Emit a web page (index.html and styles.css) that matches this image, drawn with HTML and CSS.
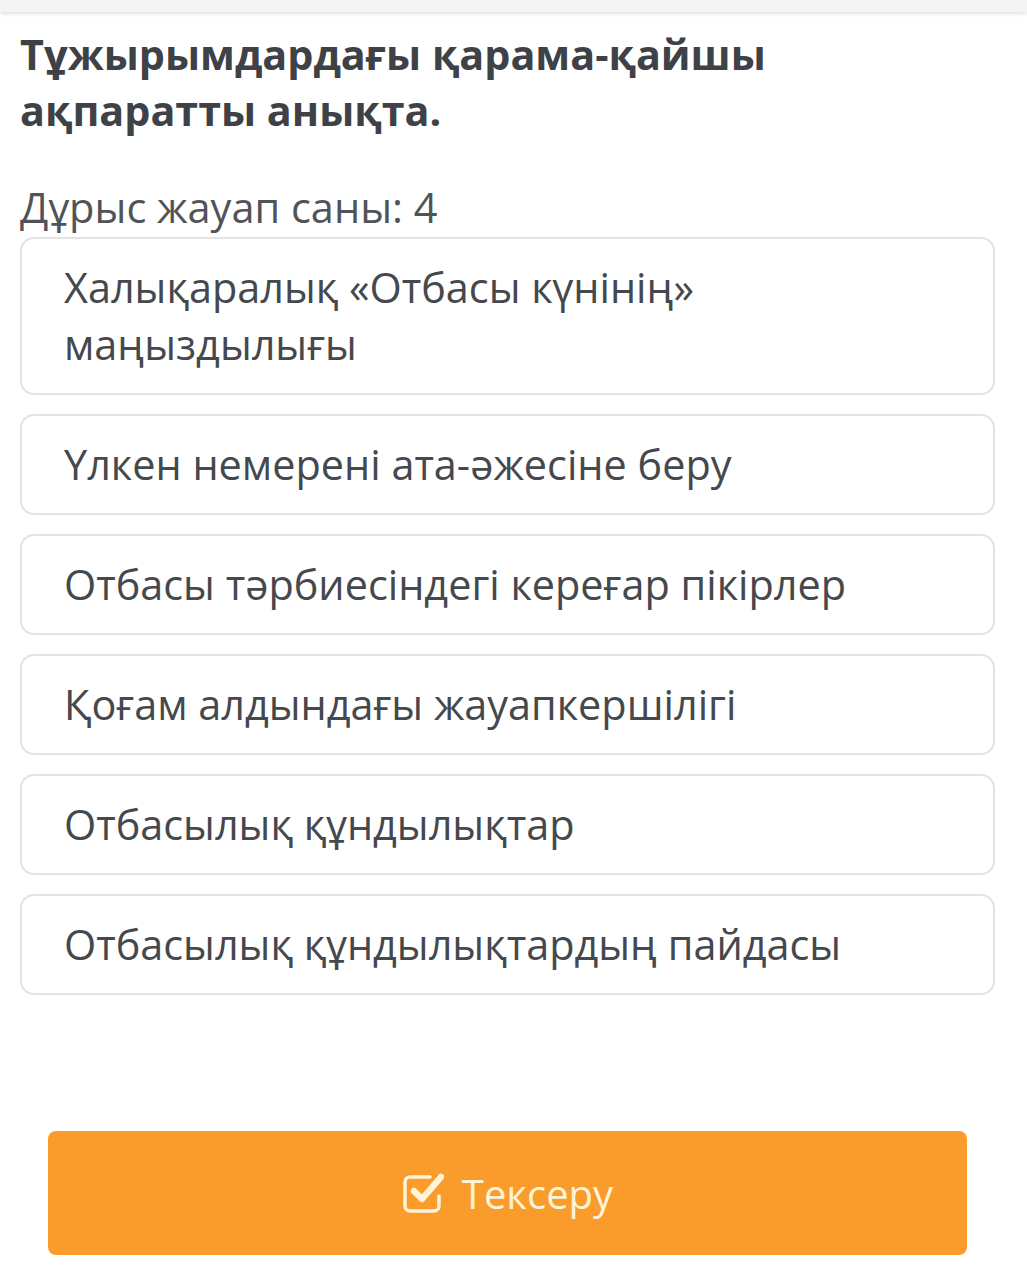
FILE: index.html
```html
<!DOCTYPE html>
<html lang="kk">

<head>
    <meta charset="UTF-8">
    <meta name="viewport" content="width=device-width, initial-scale=1.0">
    <title>Тексеру</title>
    <link rel="stylesheet" href="styles.css">
</head>

<body>
    <div class="top-bar"></div>

    <div class="container">
        <h1 class="question">Тұжырымдардағы қарама-қайшы ақпаратты анықта.</h1>

        <div class="hint">Дұрыс жауап саны: 4</div>

        <div class="options">
            <div class="option">Халықаралық «Отбасы күнінің» маңыздылығы</div>
            <div class="option">Үлкен немерені ата-әжесіне беру</div>
            <div class="option">Отбасы тәрбиесіндегі кереғар пікірлер</div>
            <div class="option">Қоғам алдындағы жауапкершілігі</div>
            <div class="option">Отбасылық құндылықтар</div>
            <div class="option">Отбасылық құндылықтардың пайдасы</div>
        </div>

        <button class="check-btn">
            <svg class="check-icon" viewBox="0 0 42 42" width="42" height="42">
                <!-- квадрат, жоғарғы оң жағы ашық -->
                <path d="M37 24v10a5 5 0 0 1-5 5H8a5 5 0 0 1-5-5V10a5 5 0 0 1 5-5h20" fill="none" stroke="currentColor" stroke-width="3.5" stroke-linecap="round"/>
                <path d="M12 19l8 8L39 5" fill="none" stroke="currentColor" stroke-width="6.5" stroke-linecap="round" stroke-linejoin="round"/>
            </svg>
            <span>Тексеру</span>
        </button>
    </div>
</body>

</html>
```

FILE: styles.css
```css
* {
    margin: 0;
    padding: 0;
    box-sizing: border-box;
}

body {
    font-family: 'Open Sans', 'Noto Sans', sans-serif;
    background: #fff;
    color: #45484c;
}

.top-bar {
    height: 12px;
    background: #f4f4f4;
    box-shadow: 0 2px 4px rgba(0, 0, 0, 0.12);
}

.container {
    padding: 0 32px 0 20px;
}

.question {
    margin-top: 14px;
    font-size: 41.3px;
    font-weight: 700;
    line-height: 56px;
    color: #3e4246;
    width: 800px;
}

.hint {
    margin-top: 47px;
    font-size: 41.5px;
    line-height: 44px;
    color: #505458;
}

.options {
    display: flex;
    flex-direction: column;
    gap: 19px;
    margin-top: 8px;
}

.option {
    border: 2px solid #e3e3e3;
    border-radius: 14px;
    padding: 20px 40px 20px 42px;
    font-size: 41.4px;
    line-height: 57px;
    color: #45484c;
}

.check-btn {
    display: flex;
    align-items: center;
    justify-content: center;
    gap: 18px;
    width: 919px;
    height: 124px;
    margin: 136px 0 0 28px;
    border: none;
    border-radius: 8px;
    background: #fa9c2b;
    color: #fff3d8;
    font-family: 'Open Sans', 'Noto Sans', sans-serif;
    font-size: 40px;
}

.check-icon {
    display: block;
}
```
